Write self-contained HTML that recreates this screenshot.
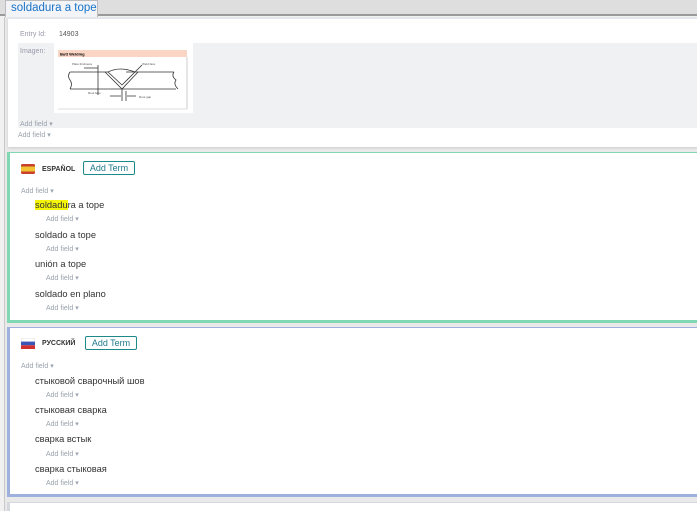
<!DOCTYPE html>
<html><head><meta charset="utf-8"><style>
*{margin:0;padding:0;box-sizing:border-box}
body{width:697px;height:511px;overflow:hidden;background:#f1f1f1;font-family:"Liberation Sans",Arial,sans-serif;position:relative}
.a{position:absolute}
.af{position:absolute;font-size:7px;color:#9aa3ad;white-space:nowrap}
.af:after{content:" \25BE"}
.t{position:absolute;font-size:9.3px;color:#333;white-space:nowrap}
.btn{position:absolute;border:1px solid #1d8a8a;border-radius:2px;color:#1d7a8a;font-size:9px;height:14px;line-height:12px;text-align:center;background:#fff}
.lang{position:absolute;font-size:7px;font-weight:bold;color:#333}
</style></head><body>
<div class="a" style="left:0;top:0;width:697px;height:16px;background:#dedede;border-bottom:2px solid #9a9a9a"></div>
<div class="a" style="left:5px;top:0;width:93px;height:17px;background:#f2f4f7;border:1px solid #bbb;border-bottom:none;color:#1a73c8;font-size:11.5px;line-height:15px;padding-left:5px;white-space:nowrap;overflow:hidden">soldadura a tope</div>
<div class="a" style="left:4px;top:17px;width:1px;height:494px;background:#c8c8c8"></div>
<div class="a" style="left:5px;top:17px;width:692px;height:494px;background:#e9e9e9"></div>
<div class="a" style="left:8px;top:18px;width:689px;height:129px;background:#fff;border-top:1px solid #dfe8f0;box-shadow:0 1px 2px #ccc"></div>
<div class="a" style="left:20px;top:31px;font-size:7px;color:#99a">Entry Id:</div>
<div class="a" style="left:59px;top:31px;font-size:7px;color:#555">14903</div>
<div class="a" style="left:18px;top:43px;width:679px;height:85px;background:#f0f1f3"></div>
<div class="a" style="left:20px;top:48px;font-size:7px;color:#99a">Imagen:</div>
<div class="a" style="left:54px;top:43px;width:139px;height:70px;background:#fff"></div>
<svg class="a" style="left:54px;top:43px" width="139" height="70">
<rect x="4" y="7" width="129" height="7" fill="#fbd5c4"/>
<text x="6" y="12.5" font-size="4" font-weight="bold" font-family="Liberation Sans">Butt Welding</text>
<line x1="133" y1="14" x2="133" y2="66" stroke="#ccc"/>
<line x1="4" y1="66" x2="133" y2="66" stroke="#ddd"/>
<g stroke="#333" stroke-width="0.8" fill="none">
<path d="M16 29H54M72 29H120M16 46H122M16 29q-3 4 0 8q3 4 0 9M120 29q-3 4 2 8q-3 4 2 9"/>
<path d="M51 29L68 46L84 29M54 29L68 42L81 29M54 29q12 -6 27 0"/>
<line x1="44" y1="22" x2="44" y2="52"/><line x1="68" y1="46" x2="68" y2="58"/><line x1="72" y1="48" x2="72" y2="58"/>
<path d="M56 53H67M73 53H82M81 29L88 22M30 25H44"/>
</g>
<g font-size="3" fill="#555" font-family="Liberation Sans"><text x="18" y="22">Plate thickness</text><text x="88" y="22">Weld face</text><text x="34" y="51">Root face</text><text x="85" y="55">Root gap</text></g>
</svg>
<div class="af" style="left:20px;top:120px">Add field</div>
<div class="af" style="left:18px;top:131px">Add field</div>

<div class="a" style="left:7px;top:152px;width:690px;height:171px;background:#fff;border-left:3px solid #7fd8b3;border-top:1px solid #7fd8b3;border-bottom:3px solid #7fd8b3"></div>
<svg class="a" style="left:21px;top:164px" width="14" height="10"><rect width="14" height="10" rx="1.5" fill="#c8402a"/><rect y="2.5" width="14" height="5" fill="#f1c232"/></svg>
<div class="lang" style="left:42px;top:166px">ESPAÑOL</div>
<div class="btn" style="left:83px;top:161px;width:52px">Add Term</div>
<div class="af" style="left:21px;top:187px">Add field</div>
<div class="t" style="left:35px;top:200px"><span style="background:#f5f50a">soldadu</span>ra a tope</div>
<div class="af" style="left:46px;top:215px">Add field</div>
<div class="t" style="left:35px;top:230px">soldado a tope</div>
<div class="af" style="left:46px;top:245px">Add field</div>
<div class="t" style="left:35px;top:259px">unión a tope</div>
<div class="af" style="left:46px;top:274px">Add field</div>
<div class="t" style="left:35px;top:289px">soldado en plano</div>
<div class="af" style="left:46px;top:304px">Add field</div>

<div class="a" style="left:7px;top:327px;width:690px;height:170px;background:#fff;border-left:3px solid #9db0de;border-top:1px solid #9db0de;border-bottom:3px solid #9db0de"></div>
<svg class="a" style="left:21px;top:338px" width="14" height="11"><rect width="14" height="11" rx="1.5" fill="#fff" stroke="#ccc" stroke-width=".5"/><rect y="3.6" width="14" height="3.7" fill="#3a55b5"/><rect y="7.3" width="14" height="3.7" fill="#d03030"/></svg>
<div class="lang" style="left:42px;top:340px">РУССКИЙ</div>
<div class="btn" style="left:85px;top:336px;width:52px">Add Term</div>
<div class="af" style="left:21px;top:362px">Add field</div>
<div class="t" style="left:35px;top:376px">стыковой сварочный шов</div>
<div class="af" style="left:46px;top:391px">Add field</div>
<div class="t" style="left:35px;top:405px">стыковая сварка</div>
<div class="af" style="left:46px;top:420px">Add field</div>
<div class="t" style="left:35px;top:434px">сварка встык</div>
<div class="af" style="left:46px;top:450px">Add field</div>
<div class="t" style="left:35px;top:464px">сварка стыковая</div>
<div class="af" style="left:46px;top:479px">Add field</div>

<div class="a" style="left:7px;top:502px;width:690px;height:9px;background:#fff;border-left:3px solid #d5d9de;border-top:1px solid #d5d9de"></div>
</body></html>
